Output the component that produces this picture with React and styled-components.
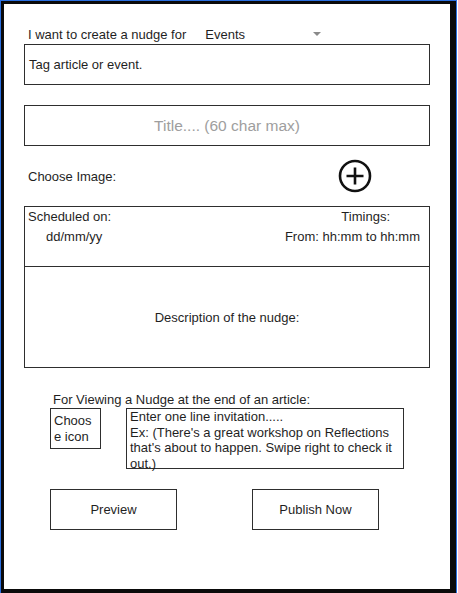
import React from 'react';
import styled, { createGlobalStyle } from 'styled-components';

const GlobalStyle = createGlobalStyle`
  html, body {
    margin: 0;
    padding: 0;
    background: #ffffff;
  }

  body {
    font-family: "Liberation Sans", Arial, sans-serif;
    font-size: 13px;
    color: #1f1f1f;
  }
`;

export default function App() {
  return (
    <>
      <GlobalStyle />
      <Canvas>
        <Frame>
          <PromptRow>
            <span>I want to create a nudge for</span>
            <Select>
              <span>Events</span>
              <Caret />
            </Select>
          </PromptRow>

          <FieldBox>Tag article or event.</FieldBox>
          <FieldBox $centered $muted>
            Title.... (60 char max)
          </FieldBox>

          <ImageRow>
            <span>Choose Image:</span>
            <PlusIcon />
          </ImageRow>

          <ScheduleCard>
            <ScheduleTop>
              <Column>
                <Line>Scheduled on:</Line>
                <Line $padLeft={18}>dd/mm/yy</Line>
              </Column>
              <Column $right>
                <Line $padRight={30}>Timings:</Line>
                <Line>From: hh:mm to hh:mm</Line>
              </Column>
            </ScheduleTop>
            <Description>Description of the nudge:</Description>
          </ScheduleCard>

          <InviteHeading>For Viewing a Nudge at the end of an article:</InviteHeading>
          <InviteRow>
            <IconPicker>Choose icon</IconPicker>
            <InviteText>
              Enter one line invitation.....
              <br />
              Ex: (There's a great workshop on Reflections that's about to
              happen. Swipe right to check it out.)
            </InviteText>
          </InviteRow>

          <ButtonRow>
            <ActionButton>Preview</ActionButton>
            <ActionButton>Publish Now</ActionButton>
          </ButtonRow>
        </Frame>
      </Canvas>
    </>
  );
}

function PlusIcon() {
  return (
    <svg width="34" height="34" viewBox="0 0 34 34" aria-hidden="true">
      <circle cx="17" cy="17" r="15" fill="none" stroke="#111" strokeWidth="2.6" />
      <path d="M17 8.5v17M8.5 17h17" stroke="#111" strokeWidth="2.6" />
    </svg>
  );
}

const Canvas = styled.div`
  box-sizing: border-box;
  width: 457px;
  height: 593px;
  border: 1px solid #2a6fe0;
  border-bottom: none;
  display: flex;
`;

const Frame = styled.div`
  box-sizing: border-box;
  flex: 1;
  display: flex;
  flex-direction: column;
  border-style: solid;
  border-color: #0a0a0a;
  border-width: 3px 6px 4px 3px;
  padding: 23px 20px 0;
`;

const PromptRow = styled.div`
  display: flex;
  align-items: center;
  height: 15px;
  line-height: 15px;
  padding-left: 4px;
`;

const Select = styled.div`
  display: flex;
  align-items: center;
  justify-content: space-between;
  width: 116px;
  margin-left: 19px;
`;

const Caret = styled.span`
  width: 0;
  height: 0;
  margin-top: -2px;
  border-left: 4px solid transparent;
  border-right: 4px solid transparent;
  border-top: 4px solid #8a8a8a;
`;

const FieldBox = styled.div`
  box-sizing: border-box;
  display: flex;
  align-items: center;
  justify-content: ${p => (p.$centered ? 'center' : 'flex-start')};
  height: 41px;
  padding: 0 4px;
  border: 1px solid #2e2e2e;
  margin-top: ${p => (p.$centered ? '20px' : '2px')};
  font-size: ${p => (p.$muted ? '15.5px' : '13px')};
  color: ${p => (p.$muted ? '#9e9e9e' : '#1f1f1f')};
`;

const ImageRow = styled.div`
  display: flex;
  align-items: center;
  justify-content: space-between;
  height: 34px;
  margin-top: 13px;
  padding: 0 58px 0 4px;
`;

const ScheduleCard = styled.div`
  box-sizing: border-box;
  height: 162px;
  margin-top: 13px;
  border: 1px solid #2e2e2e;
  display: flex;
  flex-direction: column;
`;

const ScheduleTop = styled.div`
  height: 60px;
  box-sizing: border-box;
  border-bottom: 1px solid #2e2e2e;
  display: flex;
  justify-content: space-between;
  padding: 0 9px 0 3px;
`;

const Column = styled.div`
  display: flex;
  flex-direction: column;
  align-items: ${p => (p.$right ? 'flex-end' : 'flex-start')};
`;

const Line = styled.div`
  line-height: 20px;
  padding-left: ${p => p.$padLeft || 0}px;
  padding-right: ${p => p.$padRight || 0}px;
`;

const Description = styled.div`
  flex: 1;
  display: flex;
  align-items: center;
  justify-content: center;
`;

const InviteHeading = styled.div`
  line-height: 15px;
  margin-top: 24px;
  padding-left: 29px;
`;

const InviteRow = styled.div`
  display: flex;
  align-items: flex-start;
  gap: 25px;
  margin-top: 1px;
  padding-left: 26px;
`;

const IconPicker = styled.div`
  box-sizing: border-box;
  width: 51px;
  height: 41px;
  border: 1px solid #2e2e2e;
  padding: 4px 7px 0 3px;
  line-height: 15.5px;
  word-break: break-all;
`;

const InviteText = styled.div`
  box-sizing: border-box;
  width: 278px;
  height: 61px;
  border: 1px solid #2e2e2e;
  padding: 0 0 0 3px;
  line-height: 15.5px;
`;

const ButtonRow = styled.div`
  display: flex;
  gap: 75px;
  margin-top: 20px;
  padding-left: 26px;
`;

const ActionButton = styled.button`
  box-sizing: border-box;
  width: 127px;
  height: 41px;
  background: #fff;
  border: 1px solid #2e2e2e;
  border-radius: 0;
  font-family: "Liberation Sans", Arial, sans-serif;
  font-size: 13px;
  color: #1f1f1f;
  padding: 0;
`;
